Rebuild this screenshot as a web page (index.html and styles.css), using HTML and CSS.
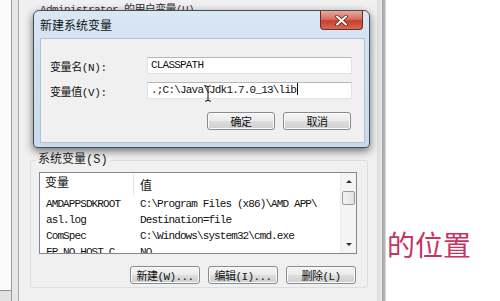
FILE: index.html
```html
<!DOCTYPE html>
<html lang="zh-CN">
<head>
    <meta charset="UTF-8">
    <title>新建系统变量</title>
    <link rel="stylesheet" href="styles.css">
</head>
<body>
    <div class="desktop">
        <!-- Khung cửa sổ phía sau (bên trái) -->
        <div class="frame-left">
            <div class="back-strip">
                <div class="back-strip-fill"></div>
                <div class="back-strip-bottom"></div>
            </div>
            <div class="frame-left-inner"></div>
        </div>

        <!-- Cửa sổ biến môi trường -->
        <div class="env-window">
            <div class="user-caption">Administrator 的用户变量(U)</div>

            <fieldset class="group">
                <legend>系统变量(S)</legend>
                <div class="list">
                    <div class="list-body">
                        <div class="list-head">
                            <div class="col-name">变量</div>
                            <div class="col-value">值</div>
                        </div>
                        <div class="list-row">
                            <div class="col-name">AMDAPPSDKROOT</div>
                            <div class="col-value">C:\Program Files (x86)\AMD APP\</div>
                        </div>
                        <div class="list-row">
                            <div class="col-name">asl.log</div>
                            <div class="col-value">Destination=file</div>
                        </div>
                        <div class="list-row">
                            <div class="col-name">ComSpec</div>
                            <div class="col-value">C:\Windows\system32\cmd.exe</div>
                        </div>
                        <div class="list-row">
                            <div class="col-name">FP_NO_HOST_C...</div>
                            <div class="col-value">NO</div>
                        </div>
                    </div>
                    <div class="scrollbar">
                        <div class="arrow up"></div>
                        <div class="track">
                            <div class="thumb"></div>
                        </div>
                        <div class="arrow down"></div>
                    </div>
                </div>
                <div class="group-buttons">
                    <button class="btn">新建(W)...</button>
                    <button class="btn">编辑(I)...</button>
                    <button class="btn">删除(L)</button>
                </div>
            </fieldset>
        </div>

        <div class="frame-right"></div>

        <div class="note">的位置</div>

        <!-- Hộp thoại "Tạo biến hệ thống" nằm đè lên trên -->
        <div class="dialog">
            <div class="title-bar">新建系统变量</div>
            <div class="close-btn">
                <svg width="13" height="11" viewBox="0 0 13 11">
                    <path d="M2 1.5 L11 9.5 M11 1.5 L2 9.5" stroke="#5a2520" stroke-width="3.6" stroke-linecap="round"/>
                    <path d="M2 1.5 L11 9.5 M11 1.5 L2 9.5" stroke="#fff" stroke-width="2" stroke-linecap="round"/>
                </svg>
            </div>
            <div class="panel">
                <div class="form">
                    <label class="label">变量名(N):</label>
                    <div class="input">CLASSPATH</div>
                    <label class="label">变量值(V):</label>
                    <div class="input">.;C:\Java\Jdk1.7.0_13\lib<span class="caret"></span></div>
                </div>
                <div class="dialog-buttons">
                    <button class="btn">确定</button>
                    <button class="btn">取消</button>
                </div>
            </div>
            <!-- Con trỏ chuột dạng I-beam -->
            <svg class="ibeam" width="8" height="17" viewBox="0 0 8 17">
                <path d="M1 1 H3 L4 2 L5 1 H7 M4 2 V15 M1 16 H3 L4 15 L5 16 H7" stroke="#111" stroke-width="1" fill="none"/>
            </svg>
        </div>
    </div>
</body>
</html>
```

FILE: styles.css
```css
/* Reset */
* {
    box-sizing: border-box;
    margin: 0;
    padding: 0;
}

body {
    width: 500px;
    height: 301px;
    overflow: hidden;
    background-color: #fff;
    font-family: "Liberation Mono", "Noto Sans CJK SC", monospace;
    font-size: 11px;
    color: #111;
}

.desktop {
    position: relative;
    display: flex;
    height: 301px;
}

/* Khung bên trái */
.frame-left {
    display: flex;
    width: 19px;
    flex-shrink: 0;
}

.back-strip {
    display: flex;
    flex-direction: column;
    width: 11px;
}

.back-strip-fill {
    flex: 1;
    background-color: #fbfbfb;
}

.back-strip-bottom {
    height: 11px;
    border-top: 1px solid #8e8e8e;
    background-color: #e2e2e2;
}

.frame-left-inner {
    flex: 1;
    border-left: 1px solid #9a9a9a;
    border-right: 1px solid #a8a8a8;
    background-color: #e6e6e6;
}

/* Cửa sổ biến môi trường */
.env-window {
    width: 358px;
    flex-shrink: 0;
    background-color: #f0f0f0;
}

.user-caption {
    padding: 4px 0 0 21px;
    line-height: 12px;
    letter-spacing: -0.6px;
    color: #333;
}

.group {
    margin: 138px 9px 0 11px;
    height: 134px;
    padding: 6px 10px 0 8px;
    border: 1px solid #d5dfe5;
    border-radius: 3px;
}

.group legend {
    margin-left: -3px;
    padding: 0 2px;
    line-height: 12px;
    font-size: 12px;
    color: #222;
}

/* Danh sách biến */
.list {
    display: flex;
    height: 82px;
    border: 1px solid #828790;
    background-color: #fff;
}

.list-body {
    flex: 1;
    overflow: hidden;
}

.list-head,
.list-row {
    display: grid;
    grid-template-columns: 94px 1fr;
    white-space: nowrap;
}

.list-head {
    height: 23px;
    align-items: center;
    font-size: 12px;
}

.list-head .col-name {
    border-right: 1px solid #e3e5e8;
    padding-left: 5px;
    line-height: 21px;
}

.list-head .col-value {
    padding-left: 6px;
}

.list-row {
    height: 16px;
    line-height: 16px;
    letter-spacing: -0.9px;
}

.list-row .col-name {
    padding-left: 6px;
    overflow: hidden;
}

.list-row .col-value {
    padding-left: 6px;
}

/* Thanh cuộn */
.scrollbar {
    display: flex;
    flex-direction: column;
    width: 16px;
    background-color: #f4f4f4;
    border-left: 1px solid #ececec;
}

.arrow {
    height: 17px;
    display: flex;
    justify-content: center;
    align-items: center;
}

.arrow::before {
    content: "";
    border-left: 3px solid transparent;
    border-right: 3px solid transparent;
}

.arrow.up::before {
    border-bottom: 3px solid #333;
}

.arrow.down::before {
    border-top: 3px solid #333;
}

.track {
    flex: 1;
    padding-top: 1px;
}

.thumb {
    height: 14px;
    margin: 0 1px;
    border: 1px solid #9a9a9a;
    border-radius: 2px;
    background: linear-gradient(to right, #f3f3f3, #e2e2e2);
}

.group-buttons {
    display: flex;
    justify-content: flex-end;
    gap: 8px;
    margin-top: 12px;
    padding-right: 1px;
}

/* Nút kiểu Windows 7 */
.btn {
    width: 69px;
    height: 18px;
    font-family: "Liberation Mono", "Noto Sans CJK SC", monospace;
    font-size: 11px;
    letter-spacing: -0.6px;
    color: #111;
    border: 1px solid #8a8a8a;
    border-radius: 3px;
    background: linear-gradient(#f4f4f4 0%, #ebebeb 50%, #dddddd 51%, #cfcfcf 100%);
    box-shadow: inset 0 0 0 1px #fbfbfb;
    cursor: default;
}

.group-buttons .btn {
    width: 70px;
}

/* Khung bên phải */
.frame-right {
    width: 9px;
    flex-shrink: 0;
    background: linear-gradient(to right, #dcdcdc 0, #e8e8e8 5px, #a4a4a4 5px, #b8b8b8 8px, #d8d8d8 8px);
}

/* Chữ chú thích màu hồng */
.note {
    padding: 228px 0 0 1px;
    font-family: "Noto Sans CJK SC", sans-serif;
    font-size: 28px;
    line-height: 32px;
    color: #c8345f;
}

/* Hộp thoại mới */
.dialog {
    position: absolute;
    left: 33px;
    top: 10px;
    width: 337px;
    height: 138px;
    display: flex;
    flex-direction: column;
    padding: 0 4px 4px 6px;
    border: 1px solid #454d57;
    border-radius: 6px 6px 4px 4px;
    background: linear-gradient(#dae7f5, #d2e1f1 30%, #c9daee);
    box-shadow: 0 3px 8px rgba(0, 0, 0, 0.55);
}

.title-bar {
    height: 27px;
    padding-top: 8px;
    line-height: 12px;
    font-family: "Noto Sans CJK SC", sans-serif;
    font-size: 12px;
    color: #111;
}

.close-btn {
    position: absolute;
    top: 0;
    right: 6px;
    width: 43px;
    height: 19px;
    display: flex;
    justify-content: center;
    align-items: center;
    border: 1px solid #6b2c26;
    border-top: none;
    border-radius: 0 0 4px 4px;
    background: linear-gradient(#e9a99c 0%, #d8705f 45%, #c5402f 55%, #d66a50 100%);
}

.panel {
    flex: 1;
    padding: 18px 12px 0 9px;
    border: 1px solid #b4c1cf;
    background-color: #f0f0f0;
}

.form {
    display: grid;
    grid-template-columns: 97px 205px;
    row-gap: 8px;
    align-items: center;
}

.label {
    font-size: 11px;
    letter-spacing: -0.4px;
}

.input {
    height: 17px;
    padding-left: 3px;
    line-height: 15px;
    letter-spacing: -0.8px;
    white-space: nowrap;
    border: 1px solid #dfe3e8;
    border-top-color: #b3b6bb;
    background-color: #fff;
}

.caret {
    display: inline-block;
    width: 1px;
    height: 12px;
    margin-left: 1px;
    vertical-align: -2px;
    background-color: #000;
}

.dialog-buttons {
    display: flex;
    justify-content: flex-end;
    gap: 8px;
    margin-top: 13px;
    padding-right: 1px;
}

.dialog-buttons .btn {
    width: 68px;
    font-family: "Noto Sans CJK SC", sans-serif;
}

.ibeam {
    position: absolute;
    left: 170px;
    top: 74px;
}
```
